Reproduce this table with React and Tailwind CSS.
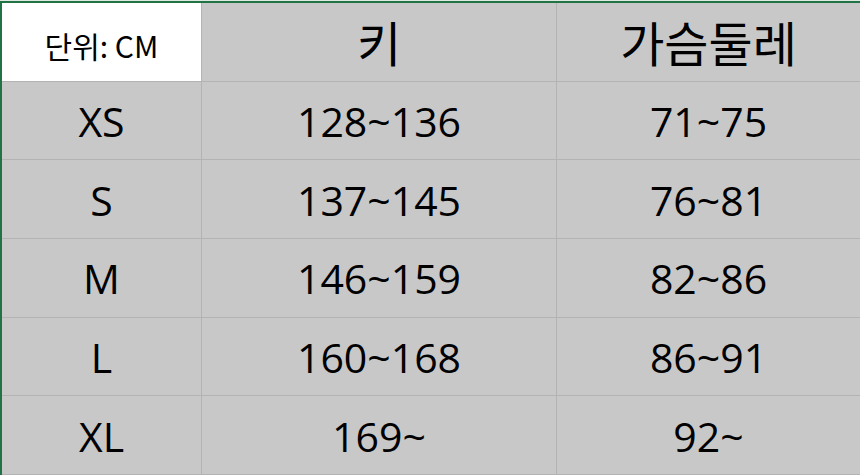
import React from 'react';

const rows = [
  ['XS', '128~136', '71~75'],
  ['S', '137~145', '76~81'],
  ['M', '146~159', '82~86'],
  ['L', '160~168', '86~91'],
  ['XL', '169~', '92~'],
];

const font = { fontFamily: '"Open Sans", "Noto Sans CJK KR", sans-serif' };
const kr = { fontFamily: '"Noto Sans CJK KR", "Open Sans", sans-serif' };

export default function App() {
  return (
    <div className="w-[860px] h-[475px] overflow-hidden bg-[#c8c8c8] text-black" style={font}>
      {/* 엑셀 선택 테두리 */}
      <div className="h-[1px] bg-[#dfe9e2]" />
      <div className="h-[2px] bg-[#217346]" />
      <div className="flex h-[472px]">
        <div className="w-[2px] bg-[#217346]" />
        <div className="flex-1 flex flex-col">
          {/* 헤더 */}
          <div className="flex h-[79px] border-b border-[#b3b3b3]">
            <div className="w-[199px] bg-white flex items-center justify-center text-[30px] leading-none pt-[6px]" style={kr}>
              단위: CM
            </div>
            <div className="w-[355px] border-l border-[#b3b3b3] flex items-center justify-center text-[48px] leading-none pb-[2px]" style={kr}>
              키
            </div>
            <div className="flex-1 border-l border-[#b3b3b3] flex items-center justify-center text-[48px] leading-none pb-[2px]" style={kr}>
              가슴둘레
            </div>
          </div>
          {rows.map((r) => (
            <div key={r[0]} className="flex h-[79px] border-b border-[#b3b3b3]">
              <div className="w-[199px] flex items-center justify-center text-[41px] leading-none pt-[2px]">{r[0]}</div>
              <div className="w-[355px] border-l border-[#b3b3b3] flex items-center justify-center text-[41px] leading-none pt-[2px]">{r[1]}</div>
              <div className="flex-1 border-l border-[#b3b3b3] flex items-center justify-center text-[41px] leading-none pt-[2px]">{r[2]}</div>
            </div>
          ))}
        </div>
      </div>
    </div>
  );
}
